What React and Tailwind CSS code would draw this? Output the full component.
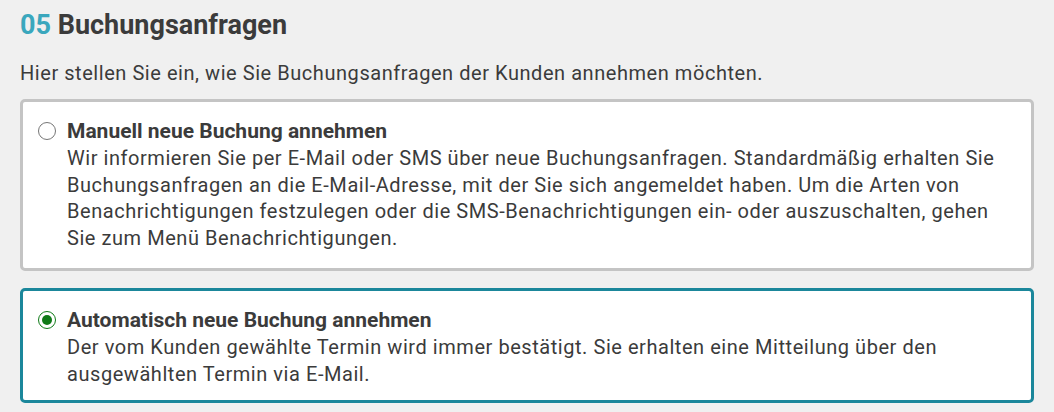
export default function App() {
  return (
    <div className="min-h-[412px] bg-[#f0f0f0] px-5 pt-[8px] text-[#3b3b3b]" style={{ fontFamily: "Roboto, 'Liberation Sans', sans-serif" }}>
      <h2 className="text-[27px] font-bold leading-[34px]">
        <span className="text-[#3aa7bd]">05</span> Buchungsanfragen
      </h2>
      <p className="mt-[18px] text-[20px] leading-[26px] tracking-[0.55px]">
        Hier stellen Sie ein, wie Sie Buchungsanfragen der Kunden annehmen möchten.
      </p>
      <div className="mt-[13px] flex flex-col gap-[17px]">
        <label className="flex gap-[11px] rounded-[5px] border-[3px] border-[#c4c4c4] bg-white pl-[15px] pr-[30px] pt-[16px] pb-[16px]">
          <span className="mt-[4px] h-[18px] w-[18px] shrink-0 rounded-full border-[1.5px] border-[#767676] bg-white" />
          <span className="text-[20px] leading-[26.8px] tracking-[0.55px]">
            <span className="block text-[21px] font-bold tracking-normal">Manuell neue Buchung annehmen</span>
            <span className="block">
              Wir informieren Sie per E-Mail oder SMS über neue Buchungsanfragen. Standardmäßig erhalten Sie Buchungsanfragen an die E-Mail-Adresse, mit der Sie sich angemeldet haben. Um die Arten von Benachrichtigungen festzulegen oder die SMS-Benachrichtigungen ein- oder auszuschalten, gehen Sie zum Menü Benachrichtigungen.
            </span>
          </span>
        </label>
        <label className="flex gap-[11px] rounded-[5px] border-[3px] border-[#1b879b] bg-white pl-[15px] pr-[30px] pt-[16px] pb-[13px]">
          <span className="mt-[4px] flex h-[18px] w-[18px] shrink-0 items-center justify-center rounded-full border-[1.5px] border-[#0f7a17] bg-white">
            <span className="h-[10px] w-[10px] rounded-full bg-[#0f7a17]" />
          </span>
          <span className="text-[20px] leading-[26.8px] tracking-[0.55px]">
            <span className="block text-[21px] font-bold tracking-normal">Automatisch neue Buchung annehmen</span>
            <span className="block">
              Der vom Kunden gewählte Termin wird immer bestätigt. Sie erhalten eine Mitteilung über den ausgewählten Termin via E-Mail.
            </span>
          </span>
        </label>
      </div>
    </div>
  );
}
